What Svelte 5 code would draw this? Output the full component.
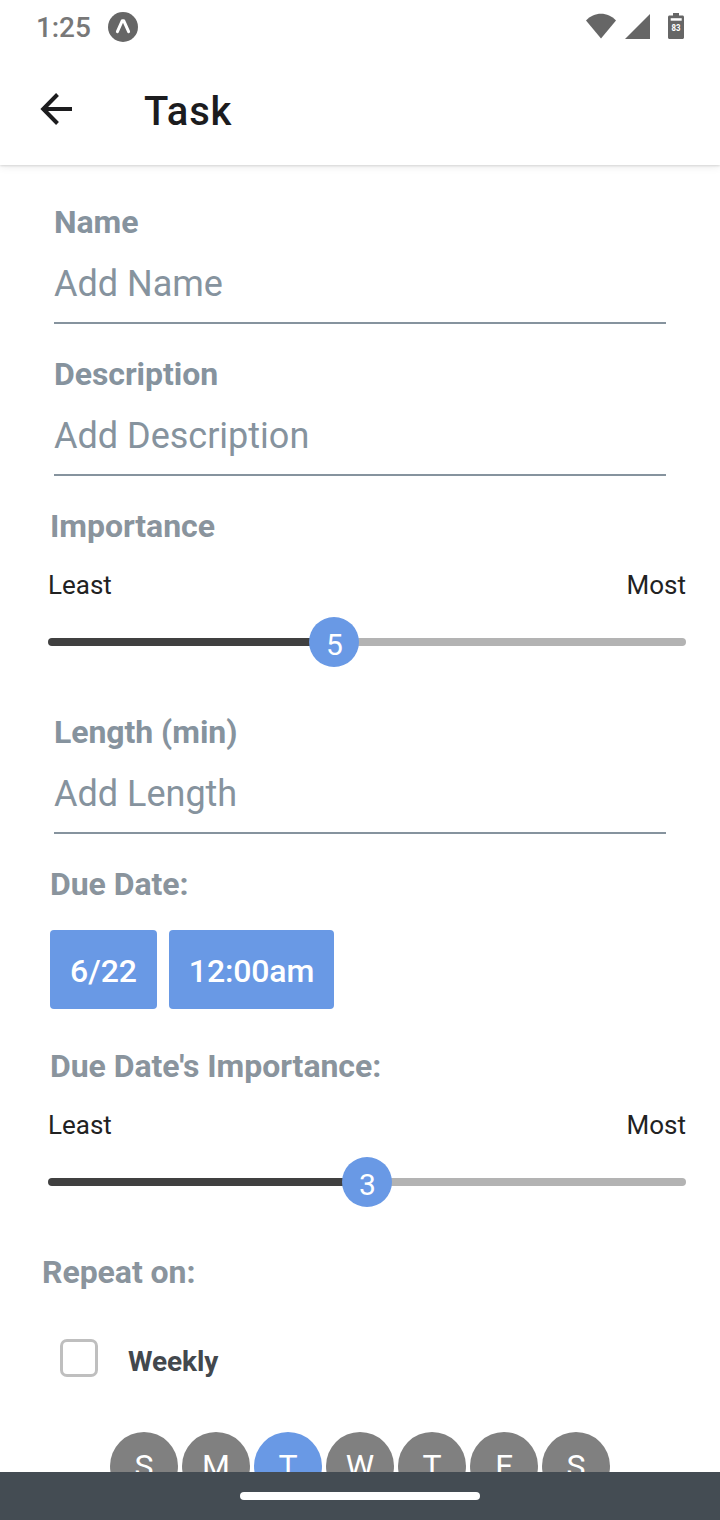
<script>
  const days = ['S', 'M', 'T', 'W', 'T', 'F', 'S'];
  const selectedDay = 2;
</script>

{#snippet field(label, placeholder)}
  <label class="field">
    <span class="label">{label}</span>
    <span class="entry">{placeholder}</span>
  </label>
{/snippet}

{#snippet slider(value, offset)}
  <div class="ends"><span>Least</span><span>Most</span></div>
  <div class="slider">
    <div class="filled" style="width: {offset}px"></div>
    <div class="thumb"><span>{value}</span></div>
    <div class="rest"></div>
  </div>
{/snippet}

<div class="screen">
  <header>
    <div class="status">
      <span class="time">1:25</span>
      <svg class="expo" width="30" height="30" viewBox="0 0 30 30">
        <circle cx="15" cy="15" r="15" fill="#666" />
        <path d="M9.400 19.600 14.200 8.800h1.600l4.800 10.800" fill="none" stroke="#fff" stroke-width="3" stroke-linecap="round" stroke-linejoin="round" />
      </svg>
      <svg class="signals" width="100" height="28" viewBox="0 0 100 28">
        <path d="M0 7.5C8 -1.5 22 -1.5 30 7.5L15 25.5Z" fill="#666" />
        <path d="M64 1v25H39Z" fill="#666" />
        <path d="M87 0h6v2.5h3.5c.8 0 1.5.7 1.5 1.5v20.500c0 .8-.7 1.500-1.500 1.500h-13c-.8 0-1.500-.7-1.500-1.500V4c0-.8.7-1.500 1.500-1.500H87Z" fill="#666" />
        <path d="M84.700 5.200h11v2.500h-11z" fill="#fff" />
        <text x="90" y="17.700" text-anchor="middle" font-family="Roboto, sans-serif" font-size="9" textLength="9" lengthAdjust="spacingAndGlyphs" font-weight="700" fill="#fff">83</text>
      </svg>
    </div>
    <div class="appbar">
      <svg width="34" height="34" viewBox="0 0 34 34" fill="none" stroke="#1c1c1e" stroke-width="4">
        <path d="M33 17H5M18.500 2.500 4.200 17l14.300 14.500" />
      </svg>
      <h1>Task</h1>
    </div>
  </header>

  <main>
    {@render field('Name', 'Add Name')}
    {@render field('Description', 'Add Description')}
    <section class="rating">
      <h2>Importance</h2>
      {@render slider(5, 261)}
    </section>
    {@render field('Length (min)', 'Add Length')}
    <section class="due">
      <h2>Due Date:</h2>
      <div class="buttons">
        <button class="date">6/22</button>
        <button class="hour">12:00am</button>
      </div>
    </section>
    <section class="rating">
      <h2>Due Date's Importance:</h2>
      {@render slider(3, 294)}
    </section>
    <section class="repeat">
      <h2>Repeat on:</h2>
      <div class="weekly"><span class="box"></span><span>Weekly</span></div>
      <div class="days">
        {#each days as day, i}
          <span class:selected={i === selectedDay}>{day}</span>
        {/each}
      </div>
    </section>
  </main>

  <footer><div class="handle"></div></footer>
</div>

<style>
  :global(body) { margin: 0; background: #fff; }
  .screen {
    width: 720px;
    height: 1520px;
    display: flex;
    flex-direction: column;
    overflow: hidden;
    background: #fff;
    font-family: Roboto, sans-serif;
  }
  header {
    flex: none;
    height: 165px;
    background: #fff;
    box-shadow: 0 1px 2px rgba(0, 0, 0, .12), 0 2px 8px rgba(0, 0, 0, .08);
  }
  .status {
    height: 56px;
    box-sizing: border-box;
    padding: 12px 34px 0 36px;
    display: flex;
    align-items: flex-start;
  }
  .time { width: 72px; font-size: 28px; line-height: 32px; font-weight: 500; letter-spacing: -.1px; color: #787878; }
  .signals { margin: 1px 0 0 auto; }
  .appbar { display: flex; padding: 36px 0 0 39px; }
  h1 { margin: -4px 0 0 71px; font-size: 40px; line-height: 48px; font-weight: 500; letter-spacing: .9px; color: #1c1c1e; }
  main { flex: 1; min-height: 0; padding-top: 38px; box-sizing: border-box; overflow: hidden; }
  .field { display: flex; flex-direction: column; height: 152px; margin: 0 54px; }
  .label, h2 { margin: 0; font-size: 32px; line-height: 38px; font-weight: 700; letter-spacing: -.06px; color: #86939e; }
  .entry {
    margin-top: 22px;
    height: 59px;
    border-bottom: 2px solid #86939e;
    font-size: 36px;
    line-height: 42px;
    color: #86939e;
  }
  .rating { height: 206px; padding: 0 34px 0 48px; }
  .rating h2, .due h2 { color: #8a949d; padding-left: 2px; }
  .ends { display: flex; justify-content: space-between; margin-top: 25px; font-size: 26px; line-height: 30px; color: #222; }
  .slider { display: flex; align-items: center; height: 50px; margin-top: 17px; }
  .rating .filled { flex: none; height: 8px; border-radius: 4px 0 0 4px; background: #404040; box-shadow: 2px 0 #404040; }
  .rest { flex: 1; height: 8px; border-radius: 0 4px 4px 0; background: #b3b3b3; box-shadow: -2px 0 #b3b3b3; }
  .thumb {
    z-index: 1;
    flex: none;
    box-sizing: border-box;
    width: 50px;
    height: 50px;
    padding-left: 1px;
    border-radius: 50%;
    background: #6999e5;
    color: #fff;
    font-size: 30px;
    line-height: 56px;
    text-align: center;
  }
  .due { height: 182px; padding: 0 48px; }
  .buttons { display: flex; gap: 12px; margin: 27px 0 0 2px; }
  button {
    height: 79px;
    padding: 2px 0 0;
    border: 0;
    border-radius: 4px;
    background: #6999e5;
    color: #fff;
    font: 500 32px/38px Roboto, sans-serif;
  }
  .date { width: 107px; }
  .hour { width: 165px; letter-spacing: -.15px; }
  .repeat { padding-left: 42px; }
  .repeat h2 { color: #8a949d; }
  .weekly {
    display: flex;
    align-items: center;
    gap: 30px;
    margin: 48px 0 0 18px;
    height: 38px;
    font-size: 28px;
    line-height: 34px;
    font-weight: 700;
    letter-spacing: -.1px;
    color: #43484d;
  }
  .weekly span:last-child { padding-top: 7px; }
  .box { box-sizing: border-box; width: 38px; height: 38px; border: 3px solid #bfbfbf; border-radius: 7px; }
  .days { display: flex; gap: 4px; margin: 55px 0 0 68px; }
  .days span {
    width: 68px;
    height: 68px;
    border-radius: 50%;
    background: #808080;
    color: #fff;
    font-size: 32px;
    line-height: 68px;
    text-align: center;
  }
  .days .selected { background: #6999e5; }
  footer { flex: none; height: 48px; display: flex; justify-content: center; align-items: center; background: #444c53; }
  .handle { width: 240px; height: 8px; border-radius: 4px; background: #fff; }
</style>
